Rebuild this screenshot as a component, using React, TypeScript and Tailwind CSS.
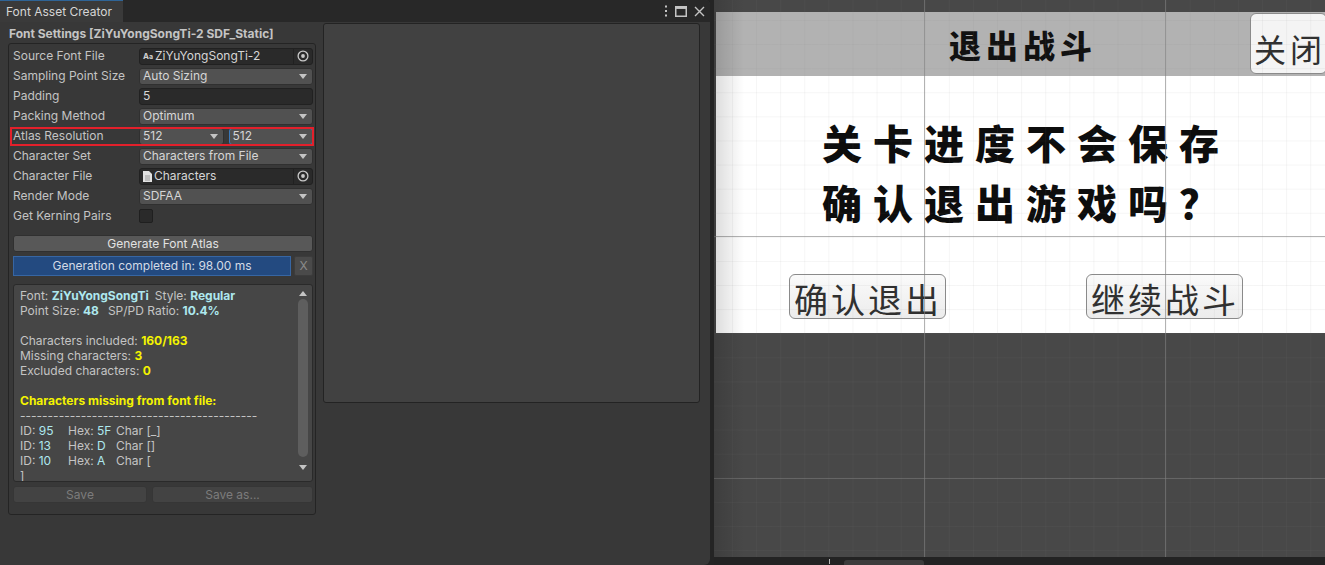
import React from 'react';

// small editor widgets
const Caret = () => (
    <svg width="8" height="5" viewBox="0 0 8 5" className="shrink-0">
        <path d="M0 0h8L4 5z" fill="#c4c4c4" />
    </svg>
);

const PickerIcon = () => (
    <svg width="12" height="12" viewBox="0 0 12 12">
        <circle cx="6" cy="6" r="4.9" fill="none" stroke="#c8c8c8" strokeWidth="1.3" />
        <circle cx="6" cy="6" r="1.9" fill="#c8c8c8" />
    </svg>
);

const DocIcon = () => (
    <svg width="9" height="11" viewBox="0 0 9 11" className="mr-[2px] shrink-0">
        <path d="M0 0h6l3 3v8H0z" fill="#e2e2e2" />
        <path d="M2 5h5M2 7h5M2 9h5" stroke="#8a8a8a" strokeWidth="0.8" />
    </svg>
);

const Dropdown: React.FC<{ value: string; focused?: boolean }> = ({ value, focused }) => (
    <div
        className={`flex h-[17px] flex-1 items-center justify-between rounded-[3px] border bg-[#515151] pl-[3px] pr-[5px] text-[#d6d6d6] ${focused ? 'border-[#3a79bb]' : 'border-[#303030]'}`}
    >
        <span>{value}</span>
        <Caret />
    </div>
);

const ObjectField: React.FC<{ icon: React.ReactNode; value: string }> = ({ icon, value }) => (
    <div className="flex h-[17px] flex-1 items-center rounded-[3px] border border-[#212121] bg-[#2a2a2a] text-[#d6d6d6]">
        <div className="flex flex-1 items-center pl-[3px]">
            {icon}
            <span>{value}</span>
        </div>
        <div className="flex h-full w-[19px] items-center justify-center border-l border-[#212121]">
            <PickerIcon />
        </div>
    </div>
);

const Row: React.FC<{ label: string; children: React.ReactNode }> = ({ label, children }) => (
    <div className="relative flex h-[20px] items-center">
        <div className="w-[126px] shrink-0 text-[#c4c4c4]">{label}</div>
        <div className="flex flex-1 items-center gap-[5px]">{children}</div>
    </div>
);

const Line: React.FC<{ children?: React.ReactNode }> = ({ children }) => (
    <div className="h-[15px] whitespace-nowrap leading-[15px]">{children}</div>
);

const MISSING = [
    { id: '95', hex: '5F', ch: 'Char [_]' },
    { id: '13', hex: 'D', ch: 'Char []' },
    { id: '10', hex: 'A', ch: 'Char [' },
];

const FontSettings = () => (
    <div className="flex w-[308px] shrink-0 flex-col">
        <div className="mt-[2px] h-[19px] pl-[1px] font-bold leading-[19px] text-[#c4c4c4]">
            Font Settings [ZiYuYongSongTi-2 SDF_Static]
        </div>
        <div className="flex flex-col rounded-[3px] border border-[#242424] pb-[11px] pl-[4px] pr-[2px] pt-[2px]">
            <Row label="Source Font File">
                <ObjectField
                    icon={
                        <span className="mr-[2px] flex items-end font-bold leading-none text-[#d0d0d0]">
                            <span className="text-[8px]">A</span>
                            <span className="text-[7px]">a</span>
                        </span>
                    }
                    value="ZiYuYongSongTi-2"
                />
            </Row>
            <Row label="Sampling Point Size">
                <Dropdown value="Auto Sizing" />
            </Row>
            <Row label="Padding">
                <div className="flex h-[17px] flex-1 items-center rounded-[3px] border border-[#212121] bg-[#2a2a2a] pl-[3px] text-[#d6d6d6]">
                    5
                </div>
            </Row>
            <Row label="Packing Method">
                <Dropdown value="Optimum" />
            </Row>
            <Row label="Atlas Resolution">
                <Dropdown value="512" />
                <Dropdown value="512" focused />
                <div className="pointer-events-none absolute -left-[3px] -right-[1px] bottom-0 top-[1px] border-2 border-[#e3202b]" />
            </Row>
            <Row label="Character Set">
                <Dropdown value="Characters from File" />
            </Row>
            <Row label="Character File">
                <ObjectField icon={<DocIcon />} value="Characters" />
            </Row>
            <Row label="Render Mode">
                <Dropdown value="SDFAA" />
            </Row>
            <Row label="Get Kerning Pairs">
                <div className="h-[14px] w-[14px] rounded-[2px] border border-[#1f1f1f] bg-[#2a2a2a]" />
            </Row>

            <div className="mt-[9px] flex h-[17px] items-center justify-center rounded-[3px] border border-[#303030] bg-[#585858] text-[#e2e2e2]">
                Generate Font Atlas
            </div>

            <div className="mt-[4px] flex h-[20px] gap-[3px]">
                <div className="flex flex-1 items-center justify-center border border-[#3766a3] bg-[#234a80] text-[#d3dbe6]">
                    Generation completed in: 98.00 ms
                </div>
                <div className="flex w-[19px] items-center justify-center rounded-[2px] border border-[#3c3c3c] bg-[#4a4a4a] text-[#8a8a8a]">
                    X
                </div>
            </div>

            <div className="mt-[8px] flex h-[198px] overflow-hidden rounded-[3px] border border-[#2a2a2a] bg-[#464646]">
                <div className="flex-1 overflow-hidden pl-[6px] pt-[3px] text-[#c4c4c4]">
                    <Line>
                        Font: <b className="text-[#aee8ee]">ZiYuYongSongTi</b>
                        <span className="ml-[6px]">Style: </span>
                        <b className="text-[#aee8ee]">Regular</b>
                    </Line>
                    <Line>
                        Point Size: <b className="text-[#aee8ee]">48</b>
                        <span className="ml-[9px]">SP/PD Ratio: </span>
                        <b className="text-[#aee8ee]">10.4%</b>
                    </Line>
                    <Line />
                    <Line>
                        Characters included: <b className="text-[#f4f400]">160/163</b>
                    </Line>
                    <Line>
                        Missing characters: <b className="text-[#f4f400]">3</b>
                    </Line>
                    <Line>
                        Excluded characters: <b className="text-[#f4f400]">0</b>
                    </Line>
                    <Line />
                    <Line>
                        <b className="text-[#f4f400]">Characters missing from font file:</b>
                    </Line>
                    <Line>{'-'.repeat(43)}</Line>
                    {MISSING.map(m => (
                        <Line key={m.id}>
                            <span className="inline-block w-[48px]">
                                ID: <span className="text-[#aee8ee]">{m.id}</span>
                            </span>
                            <span className="inline-block w-[48px]">
                                Hex: <span className="text-[#aee8ee]">{m.hex}</span>
                            </span>
                            <span>{m.ch}</span>
                        </Line>
                    ))}
                    <Line>]</Line>
                </div>
                <div className="flex w-[15px] flex-col items-center pr-[4px] pt-[6px]">
                    <svg width="8" height="5" viewBox="0 0 8 5">
                        <path d="M0 5h8L4 0z" fill="#c4c4c4" />
                    </svg>
                    <div className="mt-[3px] h-[158px] w-[10px] rounded-full bg-[#5e5e5e]" />
                    <div className="mt-[8px]">
                        <Caret />
                    </div>
                </div>
            </div>

            <div className="mt-[4px] flex h-[17px] gap-[5px] text-[#7c7c7c]">
                <div className="flex w-[134px] items-center justify-center rounded-[3px] border border-[#363636] bg-[#434343]">
                    Save
                </div>
                <div className="flex flex-1 items-center justify-center rounded-[3px] border border-[#363636] bg-[#434343]">
                    Save as...
                </div>
            </div>
        </div>
    </div>
);

const EditorWindow = () => (
    <div className="flex h-full w-[710px] shrink-0 flex-col overflow-hidden rounded-br-[6px] rounded-tr-[5px] bg-[#383838]">
        <div className="flex h-[22px] shrink-0 items-stretch justify-between bg-[#282828]">
            <div className="flex w-[123px] items-center border-t border-[#2f6496] bg-[#3a3a3a] pl-[6px] text-[#d6d6d6]">
                Font Asset Creator
            </div>
            <div className="flex items-center gap-[7px] pr-[5px]">
                <svg width="4" height="12" viewBox="0 0 4 12">
                    <rect x="1" y="0.5" width="2" height="2" fill="#c4c4c4" />
                    <rect x="1" y="5" width="2" height="2" fill="#c4c4c4" />
                    <rect x="1" y="9.5" width="2" height="2" fill="#c4c4c4" />
                </svg>
                <svg width="12" height="11" viewBox="0 0 12 11">
                    <rect x="0.75" y="0.75" width="10.5" height="9.5" fill="none" stroke="#c4c4c4" strokeWidth="1.5" />
                    <rect x="0.75" y="0.75" width="10.5" height="2.2" fill="#c4c4c4" />
                </svg>
                <svg width="11" height="11" viewBox="0 0 11 11">
                    <path d="M1 1l9 9M10 1l-9 9" stroke="#c4c4c4" strokeWidth="1.4" />
                </svg>
            </div>
        </div>
        <div className="flex flex-1 gap-[7px] pl-[8px]">
            <FontSettings />
            <div className="mt-[1px] h-[380px] w-[377px] rounded-[3px] border border-[#232323] bg-[#414141]" />
        </div>
    </div>
);

const SceneButton: React.FC<{ label: string }> = ({ label }) => (
    <div className="flex h-[45px] w-[157px] items-start whitespace-nowrap rounded-[6px] border border-[#8a8a8a] bg-[linear-gradient(to_bottom,#fafafa,#ececec)] pl-[4px] pt-[7px] font-['Noto_Sans_CJK_SC',sans-serif] text-[34px] leading-none tracking-[3px] text-[#303030]">
        {label}
    </div>
);

const SceneView = () => (
    <div className="relative flex h-full flex-1 flex-col overflow-hidden bg-[#484848]">
        <div className="h-[12px] shrink-0" />
        <div className="relative ml-[2px] flex h-[64px] shrink-0 items-center justify-center bg-[#b2b2b2]">
            <span className="pl-[5px] font-['Noto_Sans_CJK_SC',sans-serif] text-[32px] font-black leading-none tracking-[5px] text-[#111]">
                退出战斗
            </span>
            <div className="absolute right-[-2px] top-[1px] flex h-[61px] w-[77px] items-center whitespace-nowrap rounded-[6px] border border-[#8a8a8a] bg-[#f4f4f4] pl-[3px] pt-[8px] font-['Noto_Sans_CJK_SC',sans-serif] text-[32px] leading-none tracking-[4px] text-[#303030]">
                关闭
            </div>
        </div>
        <div className="ml-[2px] flex h-[257px] shrink-0 flex-col bg-white">
            <div className="mt-[36px] flex flex-col items-center whitespace-nowrap font-['Noto_Sans_CJK_SC',sans-serif] text-[40px] font-black leading-[60px] tracking-[11px] text-[#0d0d0d]">
                <span className="pl-[11px]">关卡进度不会保存</span>
                <span className="pl-[11px]">确认退出游戏吗？</span>
            </div>
            <div className="mt-[42px] flex gap-[140px] pl-[73px]">
                <SceneButton label="确认退出" />
                <SceneButton label="继续战斗" />
            </div>
        </div>
        <div className="flex-1" />
        <div className="relative flex h-[8px] shrink-0 items-end bg-[#232323] pl-[115px]">
            <div className="mb-[1px] h-[5px] w-[1px] bg-[#bbbbbb]" />
            <div className="ml-[14px] h-[5px] w-[80px] rounded-t-[3px] bg-[#3c3c3c]" />
        </div>

        {/* grid drawn over the canvas */}
        <div className="pointer-events-none absolute inset-x-0 bottom-[8px] top-0 bg-[linear-gradient(to_right,rgba(128,128,128,0.08)_1px,transparent_1px),linear-gradient(to_bottom,rgba(128,128,128,0.08)_1px,transparent_1px)] bg-[length:24.1px_24.1px] bg-[position:18px_20px]" />
        <div className="pointer-events-none absolute bottom-[8px] left-[210px] top-0 w-px bg-[rgba(128,128,128,0.6)]" />
        <div className="pointer-events-none absolute bottom-[8px] left-[451px] top-0 w-px bg-[rgba(128,128,128,0.6)]" />
        <div className="pointer-events-none absolute left-0 right-0 top-[236px] h-px bg-[rgba(128,128,128,0.6)]" />
        <div className="pointer-events-none absolute left-0 right-0 top-[478px] h-px bg-[rgba(128,128,128,0.5)]" />
        <div className="pointer-events-none absolute bottom-[8px] left-0 top-0 w-[30px] bg-[linear-gradient(to_right,rgba(0,0,0,0.14),transparent)]" />
    </div>
);

export default function App() {
    return (
        <div className="flex h-[565px] w-[1325px] gap-[4px] overflow-hidden bg-[#242424] font-['Inter','Liberation_Sans',sans-serif] text-[12px]">
            <EditorWindow />
            <SceneView />
        </div>
    );
}
